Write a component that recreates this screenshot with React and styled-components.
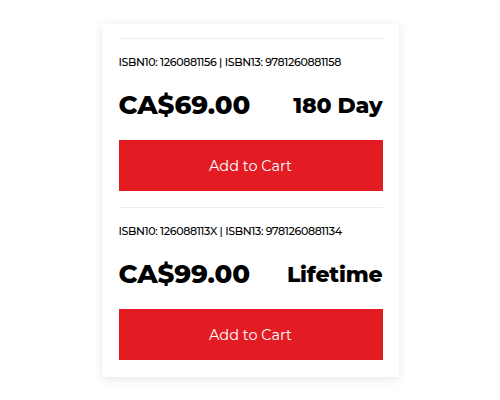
import React from "react";
import styled, { createGlobalStyle } from "styled-components";

const options = [
    { isbn10: "1260881156", isbn13: "9781260881158", price: "CA$69.00", term: "180 Day" },
    { isbn10: "126088113X", isbn13: "9781260881134", price: "CA$99.00", term: "Lifetime" },
];

export default function App() {
    return (
        <>
            <GlobalStyle />
            <Page>
                <Card>
                    {options.map((o) => (
                        <Option key={o.isbn13}>
                            <Isbn>
                                ISBN10: {o.isbn10} | ISBN13: {o.isbn13}
                            </Isbn>
                            <PriceRow>
                                <Price>{o.price}</Price>
                                <Term>{o.term}</Term>
                            </PriceRow>
                            <CartButton type="button">Add to Cart</CartButton>
                        </Option>
                    ))}
                </Card>
            </Page>
        </>
    );
}

/* ====== STYLES ====== */

const GlobalStyle = createGlobalStyle`
    html, body {
        margin: 0;
        padding: 0;
        background: #ffffff;
        font-family: "Montserrat", "Inter", "Noto Sans", sans-serif;
    }
`;

const Page = styled.div`
    width: 500px;
    height: 400px;
    display: flex;
    justify-content: center;
    align-items: flex-start;
    padding-top: 24px;
    box-sizing: border-box;
`;

const Card = styled.div`
    width: 297px;
    box-sizing: border-box;
    background: #fff;
    padding: 14px 16px 1px 17px;
    box-shadow: 0 2px 10px rgba(0, 0, 0, 0.1);
    display: flex;
    flex-direction: column;
`;

const Option = styled.div`
    border-top: 1px solid #ececec;
    padding: 15px 0 16px;
    display: flex;
    flex-direction: column;
`;

const Isbn = styled.div`
    font-size: 11px;
    line-height: 16px;
    font-weight: 500;
    color: #000;
    letter-spacing: -0.35px;
`;

const PriceRow = styled.div`
    display: flex;
    justify-content: space-between;
    align-items: center;
    margin-top: 20px;
    height: 30px;
`;

const Price = styled.div`
    font-size: 26px;
    font-weight: 800;
    color: #000;
    letter-spacing: 0;
`;

const Term = styled.div`
    font-size: 22px;
    font-weight: 800;
    color: #000;
    letter-spacing: -0.2px;
`;

const CartButton = styled.button`
    margin-top: 20px;
    height: 51px;
    width: 100%;
    border: none;
    background: #e31b23;
    color: #fff;
    font-family: inherit;
    font-size: 14.5px;
    font-weight: 400;
    cursor: pointer;
`;
